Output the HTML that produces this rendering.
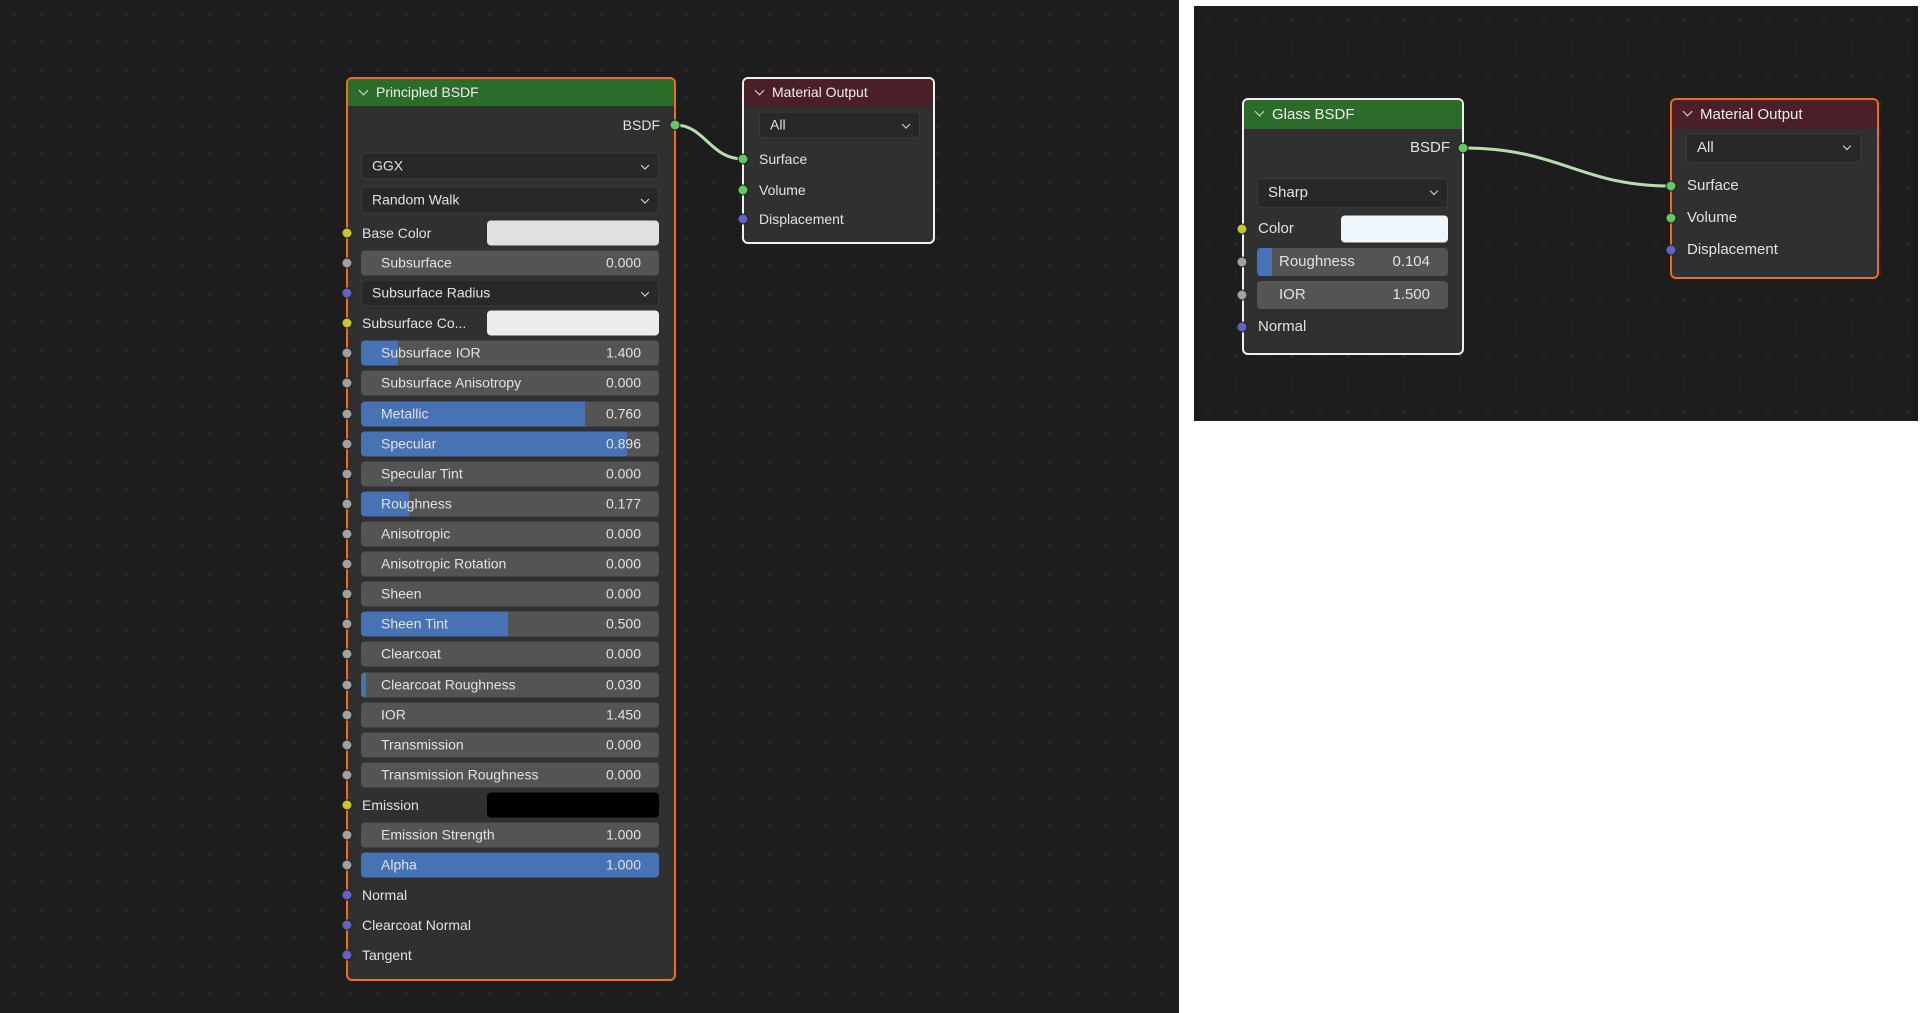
<!DOCTYPE html>
<html><head><meta charset="utf-8"><style>
*{margin:0;padding:0;box-sizing:border-box}
body{width:1920px;height:1013px;background:#fff;position:relative;overflow:hidden;font-family:"Liberation Sans",sans-serif;font-size:14px;color:#e2e2e2}
.bg{position:absolute;background-color:#1d1d1d;background-image:radial-gradient(circle,#2a2a2a 1.3px,transparent 1.6px);background-size:28px 28px}
.node{position:absolute;background:#303030;border-radius:6px;border:2px solid #e8701e;overflow:visible}
.hd{position:absolute;left:0;right:0;top:0;height:27px;border-radius:4px 4px 0 0;padding-left:28px;line-height:26px;color:#eee;font-size:14px}
.hd:before{content:"";position:absolute;left:12px;top:8px;width:6px;height:6px;border-right:1.5px solid #ddd;border-bottom:1.5px solid #ddd;transform:rotate(45deg)}
.e{position:absolute;transform:translateY(-50%)}
.s{position:absolute;width:11px;height:11px;border-radius:50%;transform:translate(-50%,-50%);border:1px solid #222}
.sl{height:25px;background:#545454;border-radius:4px;overflow:hidden}
.sl .f{position:absolute;left:0;top:0;bottom:0;background:#4772b3}
.sl .l{position:absolute;left:20px;top:0;line-height:25px}
.sl .v{position:absolute;right:18px;top:0;line-height:25px}
.dd{height:27px;background:#282828;border-radius:4px;border:1px solid #3a3a3a;line-height:25px;padding-left:10px}
.dd:after{content:"";position:absolute;right:10px;top:9px;width:5px;height:5px;border-right:1.5px solid #ddd;border-bottom:1.5px solid #ddd;transform:rotate(45deg)}
.sw{height:25px;border-radius:4px}
.lb{line-height:20px}
.y{background:#c7c729}.g{background:#a1a1a1}.b{background:#6363c7}.gr{background:#63c763}
</style></head><body>
<div class="bg" style="left:0;top:0;width:1179px;height:1013px"></div>
<div class="bg" style="left:1194px;top:6px;width:724px;height:415px"></div>

<svg style="position:absolute;left:0;top:0" width="1920" height="1013">
<path d="M675 125 C705 125,710 159,743 159" stroke="#b8dcb0" stroke-width="3" fill="none"/>
<path d="M1463 148 C1560 148,1580 186,1670 186" stroke="#b8dcb0" stroke-width="3" fill="none"/>
</svg>

<div class="node" style="left:346px;top:77px;width:330px;height:904px">
<div class="hd" style="background:#2b6c2b">Principled BSDF</div>
</div>
<div class="e lb" style="left:600px;top:125px;width:60px;text-align:right">BSDF</div>
<div class="s gr" style="left:675px;top:125px"></div>
<div class="e dd" style="left:361px;top:166px;width:298px">GGX</div>
<div class="e dd" style="left:361px;top:200px;width:298px">Random Walk</div>

<div class="s y" style="left:347px;top:233px"></div><div class="e lb" style="left:362px;top:233px">Base Color</div><div class="e sw" style="left:487px;top:233px;width:172px;background:#e0e0e0"></div>
<div class="s g" style="left:347px;top:263px"></div><div class="e sl" style="left:361px;top:263px;width:298px"><span class="l">Subsurface</span><span class="v">0.000</span></div>
<div class="s b" style="left:347px;top:293px"></div><div class="e dd" style="left:361px;top:293px;width:298px">Subsurface Radius</div>
<div class="s y" style="left:347px;top:323px"></div><div class="e lb" style="left:362px;top:323px">Subsurface Co...</div><div class="e sw" style="left:487px;top:323px;width:172px;background:#ececec"></div>
<div class="s g" style="left:347px;top:353px"></div><div class="e sl" style="left:361px;top:353px;width:298px"><div class="f" style="width:37px"></div><span class="l">Subsurface IOR</span><span class="v">1.400</span></div>
<div class="s g" style="left:347px;top:383px"></div><div class="e sl" style="left:361px;top:383px;width:298px"><span class="l">Subsurface Anisotropy</span><span class="v">0.000</span></div>
<div class="s g" style="left:347px;top:414px"></div><div class="e sl" style="left:361px;top:414px;width:298px"><div class="f" style="width:224px"></div><span class="l">Metallic</span><span class="v">0.760</span></div>
<div class="s g" style="left:347px;top:444px"></div><div class="e sl" style="left:361px;top:444px;width:298px"><div class="f" style="width:266px"></div><span class="l">Specular</span><span class="v">0.896</span></div>
<div class="s g" style="left:347px;top:474px"></div><div class="e sl" style="left:361px;top:474px;width:298px"><span class="l">Specular Tint</span><span class="v">0.000</span></div>
<div class="s g" style="left:347px;top:504px"></div><div class="e sl" style="left:361px;top:504px;width:298px"><div class="f" style="width:48px"></div><span class="l">Roughness</span><span class="v">0.177</span></div>
<div class="s g" style="left:347px;top:534px"></div><div class="e sl" style="left:361px;top:534px;width:298px"><span class="l">Anisotropic</span><span class="v">0.000</span></div>
<div class="s g" style="left:347px;top:564px"></div><div class="e sl" style="left:361px;top:564px;width:298px"><span class="l">Anisotropic Rotation</span><span class="v">0.000</span></div>
<div class="s g" style="left:347px;top:594px"></div><div class="e sl" style="left:361px;top:594px;width:298px"><span class="l">Sheen</span><span class="v">0.000</span></div>
<div class="s g" style="left:347px;top:624px"></div><div class="e sl" style="left:361px;top:624px;width:298px"><div class="f" style="width:147px"></div><span class="l">Sheen Tint</span><span class="v">0.500</span></div>
<div class="s g" style="left:347px;top:654px"></div><div class="e sl" style="left:361px;top:654px;width:298px"><span class="l">Clearcoat</span><span class="v">0.000</span></div>
<div class="s g" style="left:347px;top:685px"></div><div class="e sl" style="left:361px;top:685px;width:298px"><div class="f" style="width:5px"></div><span class="l">Clearcoat Roughness</span><span class="v">0.030</span></div>
<div class="s g" style="left:347px;top:715px"></div><div class="e sl" style="left:361px;top:715px;width:298px"><span class="l">IOR</span><span class="v">1.450</span></div>
<div class="s g" style="left:347px;top:745px"></div><div class="e sl" style="left:361px;top:745px;width:298px"><span class="l">Transmission</span><span class="v">0.000</span></div>
<div class="s g" style="left:347px;top:775px"></div><div class="e sl" style="left:361px;top:775px;width:298px"><span class="l">Transmission Roughness</span><span class="v">0.000</span></div>
<div class="s y" style="left:347px;top:805px"></div><div class="e lb" style="left:362px;top:805px">Emission</div><div class="e sw" style="left:487px;top:805px;width:172px;background:#000"></div>
<div class="s g" style="left:347px;top:835px"></div><div class="e sl" style="left:361px;top:835px;width:298px"><span class="l">Emission Strength</span><span class="v">1.000</span></div>
<div class="s g" style="left:347px;top:865px"></div><div class="e sl" style="left:361px;top:865px;width:298px"><div class="f" style="width:298px"></div><span class="l">Alpha</span><span class="v">1.000</span></div>
<div class="s b" style="left:347px;top:895px"></div><div class="e lb" style="left:362px;top:895px">Normal</div>
<div class="s b" style="left:347px;top:925px"></div><div class="e lb" style="left:362px;top:925px">Clearcoat Normal</div>
<div class="s b" style="left:347px;top:955px"></div><div class="e lb" style="left:362px;top:955px">Tangent</div>

<div class="node" style="left:742px;top:77px;width:193px;height:167px;border-color:#f0f0f0">
<div class="hd" style="background:#4a1f28">Material Output</div>
</div>
<div class="e dd" style="left:759px;top:125px;width:161px">All</div>
<div class="s gr" style="left:743px;top:159px"></div><div class="e lb" style="left:759px;top:159px">Surface</div>
<div class="s gr" style="left:743px;top:190px"></div><div class="e lb" style="left:759px;top:190px">Volume</div>
<div class="s b" style="left:743px;top:219px"></div><div class="e lb" style="left:759px;top:219px">Displacement</div>

<div class="node" style="left:1242px;top:98px;width:222px;height:257px;border-color:#f0f0f0">
<div class="hd" style="background:#2b6c2b;height:29px;line-height:29px;font-size:15px">Glass BSDF</div>
</div>
<div class="e lb" style="left:1390px;top:148px;width:60px;text-align:right;font-size:15px">BSDF</div>
<div class="s gr" style="left:1463px;top:148px"></div>
<div class="e dd" style="left:1257px;top:193px;width:191px;height:30px;line-height:28px;font-size:15px">Sharp</div>
<div class="s y" style="left:1242px;top:229px"></div><div class="e lb" style="left:1258px;top:229px;font-size:15px">Color</div><div class="e sw" style="left:1341px;top:229px;width:107px;height:27px;background:#eef6fc"></div>
<div class="s g" style="left:1242px;top:262px"></div><div class="e sl" style="left:1257px;top:262px;width:191px;height:28px"><div class="f" style="width:15px"></div><span class="l" style="left:22px;line-height:28px;font-size:15px">Roughness</span><span class="v" style="right:18px;line-height:28px;font-size:15px">0.104</span></div>
<div class="s g" style="left:1242px;top:295px"></div><div class="e sl" style="left:1257px;top:295px;width:191px;height:28px"><span class="l" style="left:22px;line-height:28px;font-size:15px">IOR</span><span class="v" style="right:18px;line-height:28px;font-size:15px">1.500</span></div>
<div class="s b" style="left:1242px;top:327px"></div><div class="e lb" style="left:1258px;top:327px;font-size:15px">Normal</div>

<div class="node" style="left:1670px;top:98px;width:209px;height:181px">
<div class="hd" style="background:#4a1f28;height:29px;line-height:29px;font-size:15px">Material Output</div>
</div>
<div class="e dd" style="left:1686px;top:148px;width:175px;height:30px;line-height:28px;font-size:15px">All</div>
<div class="s gr" style="left:1671px;top:186px"></div><div class="e lb" style="left:1687px;top:186px;font-size:15px">Surface</div>
<div class="s gr" style="left:1671px;top:218px"></div><div class="e lb" style="left:1687px;top:218px;font-size:15px">Volume</div>
<div class="s b" style="left:1671px;top:250px"></div><div class="e lb" style="left:1687px;top:250px;font-size:15px">Displacement</div>
</body></html>
